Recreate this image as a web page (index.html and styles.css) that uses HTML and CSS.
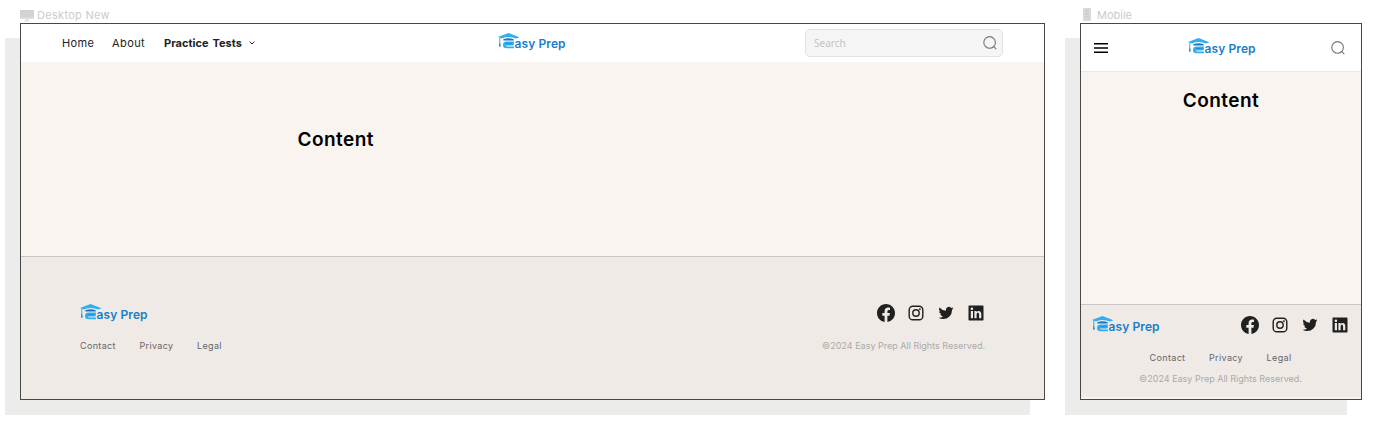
FILE: index.html
```html
<!DOCTYPE html>
<html lang="en">
<head>
<meta charset="utf-8">
<title>Easy Prep</title>
<link rel="stylesheet" href="styles.css">
</head>
<body>
<svg class="defs" aria-hidden="true">
  <symbol id="cap" viewBox="0 0 22 16">
    <path d="M0 4.1 10.5 0 21.5 4.2 18 5.6Q11 2.6 4 5.4Z" fill="#31aef0"/>
    <path d="M1.8 4.5V13" stroke="#31aef0" stroke-width="1"/>
    <path d="M1.8 9.2 2.8 13.5H.9Z" fill="#1b7fc4"/>
    <path d="M5.3 7.4V6.2Q10.5 4.3 15.7 6.2V7.4Z" fill="#1779c2"/>
    <path d="M15.8 8.6H8.8Q5 8.6 5 12T8.8 15.3H16V13.4H9.2Q7.9 13.3 7.8 12.6H14.5Q16 12.4 16 10.8Z" fill="#31aef0"/>
    <path d="M7.8 10.6H14.5" stroke="#1779c2" stroke-width=".6"/>
  </symbol>
  <symbol id="search" viewBox="0 0 14 14">
    <circle cx="6.6" cy="6.4" r="5.8" fill="none" stroke="#777" stroke-width="1.1"/>
    <path d="M10.8 10.6 13.3 13.2" stroke="#777" stroke-width="1.1"/>
  </symbol>
  <symbol id="facebook" viewBox="0 0 24 24">
    <path d="M24 12.07C24 5.4 18.63 0 12 0S0 5.4 0 12.07C0 18.1 4.39 23.1 10.13 24v-8.44H7.08v-3.49h3.05V9.41c0-3.02 1.79-4.69 4.53-4.69 1.31 0 2.68.24 2.68.24v2.97h-1.51c-1.49 0-1.96.93-1.96 1.89v2.25h3.33l-.53 3.49h-2.8V24C19.61 23.1 24 18.1 24 12.07Z"/>
  </symbol>
  <symbol id="instagram" viewBox="0 0 18 18">
    <rect x="2.2" y="2.2" width="13.6" height="13.6" rx="3.6" fill="none" stroke="#202020" stroke-width="1.4"/>
    <circle cx="9" cy="9" r="3.2" fill="none" stroke="#202020" stroke-width="1.4"/>
    <circle cx="12.9" cy="5.1" r=".95"/>
  </symbol>
  <symbol id="twitter" viewBox="0 0 24 24">
    <path d="M22 5.8a8.5 8.5 0 0 1-2.36.64 4.13 4.13 0 0 0 1.81-2.27 8.2 8.2 0 0 1-2.61 1 4.1 4.1 0 0 0-7 3.74 11.64 11.64 0 0 1-8.45-4.29 4.16 4.16 0 0 0 1.27 5.49 4.1 4.1 0 0 1-1.86-.52v.05a4.1 4.1 0 0 0 3.3 4 3.9 3.9 0 0 1-1.1.17 5 5 0 0 1-.77-.07 4.11 4.11 0 0 0 3.83 2.84A8.22 8.22 0 0 1 3 18.34a8 8 0 0 1-1-.06 11.57 11.57 0 0 0 6.29 1.85A11.59 11.59 0 0 0 20 8.45v-.53a8.4 8.4 0 0 0 2-2.12Z"/>
  </symbol>
  <symbol id="linkedin" viewBox="0 0 18 18">
    <path fill-rule="evenodd" d="M2.2 1.5H15.8Q16.5 1.5 16.5 2.2V15.8Q16.5 16.5 15.8 16.5H2.2Q1.5 16.5 1.5 15.8V2.2Q1.5 1.5 2.2 1.5ZM3.8 7.1V14.2H6V7.1ZM4.9 3.5A1.3 1.3 0 1 0 4.9 6.1 1.3 1.3 0 1 0 4.9 3.5ZM7.4 7.1V14.2H9.6V10.7C9.6 8.3 12.1 8.3 12.1 10.5V14.2H14.3V9.9C14.3 6.4 10.8 6.2 9.6 8.1V7.1Z"/>
  </symbol>
</svg>

<section class="board board-desktop">
  <div class="label">
    <svg class="label-desktop" viewBox="0 0 14 12"><path d="M0 0H14V9H0Z" fill="#d2d2d2"/><path d="M0 7.5H14V9H0Z" fill="#e2e2e2"/><path d="M5.5 9H8.5V10.5H10V11.5H4V10.5H5.5Z" fill="#e2e2e2"/></svg>
    <span class="label-text name-desktop">Desktop New</span>
  </div>
  <div class="frame">
    <header class="bar">
      <nav class="nav">
        <a class="home">Home</a>
        <a class="about">About</a>
        <a class="tests">Practice Tests</a>
        <svg class="chevron" viewBox="0 0 6 4"><path d="M.6.6 3 3 5.4.6" fill="none" stroke="#222" stroke-width="1"/></svg>
      </nav>
      <div class="logo"><svg class="cap"><use href="#cap"/></svg><span class="logo-text">asy Prep</span></div>
      <div class="search"><span>Search</span><svg class="search-icon"><use href="#search"/></svg></div>
    </header>
    <main class="content"><h1>Content</h1></main>
    <footer class="footer">
      <div class="row">
        <div class="logo"><svg class="cap"><use href="#cap"/></svg><span class="logo-text">asy Prep</span></div>
        <div class="social">
          <svg><use href="#facebook"/></svg><svg><use href="#instagram"/></svg><svg><use href="#twitter"/></svg><svg><use href="#linkedin"/></svg>
        </div>
      </div>
      <div class="row legal">
        <div class="links"><a>Contact</a><a>Privacy</a><a>Legal</a></div>
        <p class="copyright">©2024 Easy Prep All Rights Reserved.</p>
      </div>
    </footer>
  </div>
</section>

<section class="board board-mobile">
  <div class="label">
    <svg class="label-mobile" viewBox="0 0 8 13"><rect width="8" height="13" rx=".8" fill="#d9d9d9"/><path d="M2 3H6M2 6H6M2 9H6" stroke="#c6c6c6"/></svg>
    <span class="label-text name-mobile">Mobile</span>
  </div>
  <div class="frame">
    <header class="bar">
      <svg class="menu" viewBox="0 0 14 10"><path d="M0 .8H14M0 5H14M0 9.2H14" stroke="#000" stroke-width="1.5"/></svg>
      <div class="logo"><svg class="cap"><use href="#cap"/></svg><span class="logo-text">asy Prep</span></div>
      <svg class="search-icon"><use href="#search"/></svg>
    </header>
    <main class="content"><h1>Content</h1></main>
    <footer class="footer">
      <div class="row">
        <div class="logo"><svg class="cap"><use href="#cap"/></svg><span class="logo-text">asy Prep</span></div>
        <div class="social">
          <svg><use href="#facebook"/></svg><svg><use href="#instagram"/></svg><svg><use href="#twitter"/></svg><svg><use href="#linkedin"/></svg>
        </div>
      </div>
      <div class="links"><a>Contact</a><a>Privacy</a><a>Legal</a></div>
      <p class="copyright">©2024 Easy Prep All Rights Reserved.</p>
    </footer>
  </div>
</section>
</body>
</html>
```

FILE: styles.css
```css
* { box-sizing: border-box; }
body {
  margin: 0;
  height: 439px;
  padding: 8px 0 0 20px;
  display: flex;
  align-items: flex-start;
  gap: 35px;
  overflow: hidden;
  background: #fff;
  color: #222;
  font-family: Inter, "Liberation Sans", sans-serif;
}
svg { display: block; flex: none; }
h1, p { margin: 0; }
.defs { width: 0; height: 0; position: absolute; }
.board-desktop { width: 1025px; }
.board-mobile { width: 282px; }
.label { height: 15px; display: flex; align-items: flex-start; color: #cbcbcb; }
.label-text { font-size: 11px; line-height: 14px; white-space: nowrap; }
.label-desktop { width: 14px; height: 12px; margin: 2px 3px 0 0; }
.label-mobile { width: 8px; height: 13px; margin: 0 6px 0 3px; }
.name-desktop { letter-spacing: .05px; }
.name-mobile { letter-spacing: 0; }
.frame {
  height: 377px;
  display: flex;
  flex-direction: column;
  border: 1px solid #474747;
  background: #f9f4f0;
  box-shadow: -15px 15px #ececeb;
}
.bar { display: flex; align-items: center; background: #fff; }
.board-desktop .bar { height: 38px; padding: 0 41px; }
.board-mobile .bar { height: 48px; padding: 0 16px 0 13px; border-bottom: 1px solid #f1e3f1; }
.nav { width: 437px; display: flex; align-items: center; font-size: 11px; line-height: 16px; white-space: nowrap; }
.home { width: 50px; letter-spacing: .35px; }
.about { width: 52px; letter-spacing: .42px; }
.tests { width: 85px; font-weight: 700; letter-spacing: .02px; word-spacing: 1.4px; }
.chevron { width: 6px; height: 4px; }
.logo { width: 68px; height: 20px; display: flex; align-items: flex-start; }
.cap { width: 22px; height: 16px; margin-right: -5.5px; }
.logo-text {
  margin-top: 3px;
  color: #1b7dc5;
  font-size: 12px;
  font-weight: 600;
  line-height: 16px;
  letter-spacing: .1px;
  white-space: nowrap;
}
.board-desktop .bar .logo { margin-left: -1px; }
.board-desktop .label-text { letter-spacing: .3px; }
.search {
  width: 198px;
  height: 28px;
  margin-left: auto;
  padding: 0 5px 0 8px;
  display: flex;
  align-items: center;
  justify-content: space-between;
  border: 1px solid #e2e2e2;
  border-radius: 5px;
  background: #f5f5f5;
  color: #c3c3c3;
  font: 10px "Noto Sans", sans-serif;
}
.search-icon { width: 14px; height: 14px; }
.board-mobile .search-icon { margin-left: auto; }
.menu { width: 14px; height: 10px; margin-right: 80px; }
.content { flex: 1; }
h1 { color: #000; font-size: 19px; line-height: 24px; font-weight: 600; letter-spacing: .45px; }
.board-desktop .content { padding: 66px 0 0 276.5px; }
.board-mobile .content { padding-top: 17px; text-align: center; }
.footer { background: #efeae6; border-top: 1px solid #c9c5c2; }
.board-desktop .footer { height: 143px; padding: 47px 59px 0; }
.board-mobile .footer { height: 93px; margin-bottom: 2px; padding: 11px 12px 0 11px; }
.row { display: flex; justify-content: space-between; align-items: flex-start; }
.social { display: flex; gap: 12px; fill: #202020; }
.social svg { width: 18px; height: 18px; }
.legal { margin-top: 14px; }
.links { display: flex; gap: 23.6px; color: #666; font-size: 9px; line-height: 16px; letter-spacing: .35px; }
.copyright { color: #aaa; font-size: 9px; line-height: 16px; white-space: nowrap; }
.board-mobile .links { margin-top: 14px; justify-content: center; }
.board-mobile .copyright { margin-top: 5px; text-align: center; }
```
